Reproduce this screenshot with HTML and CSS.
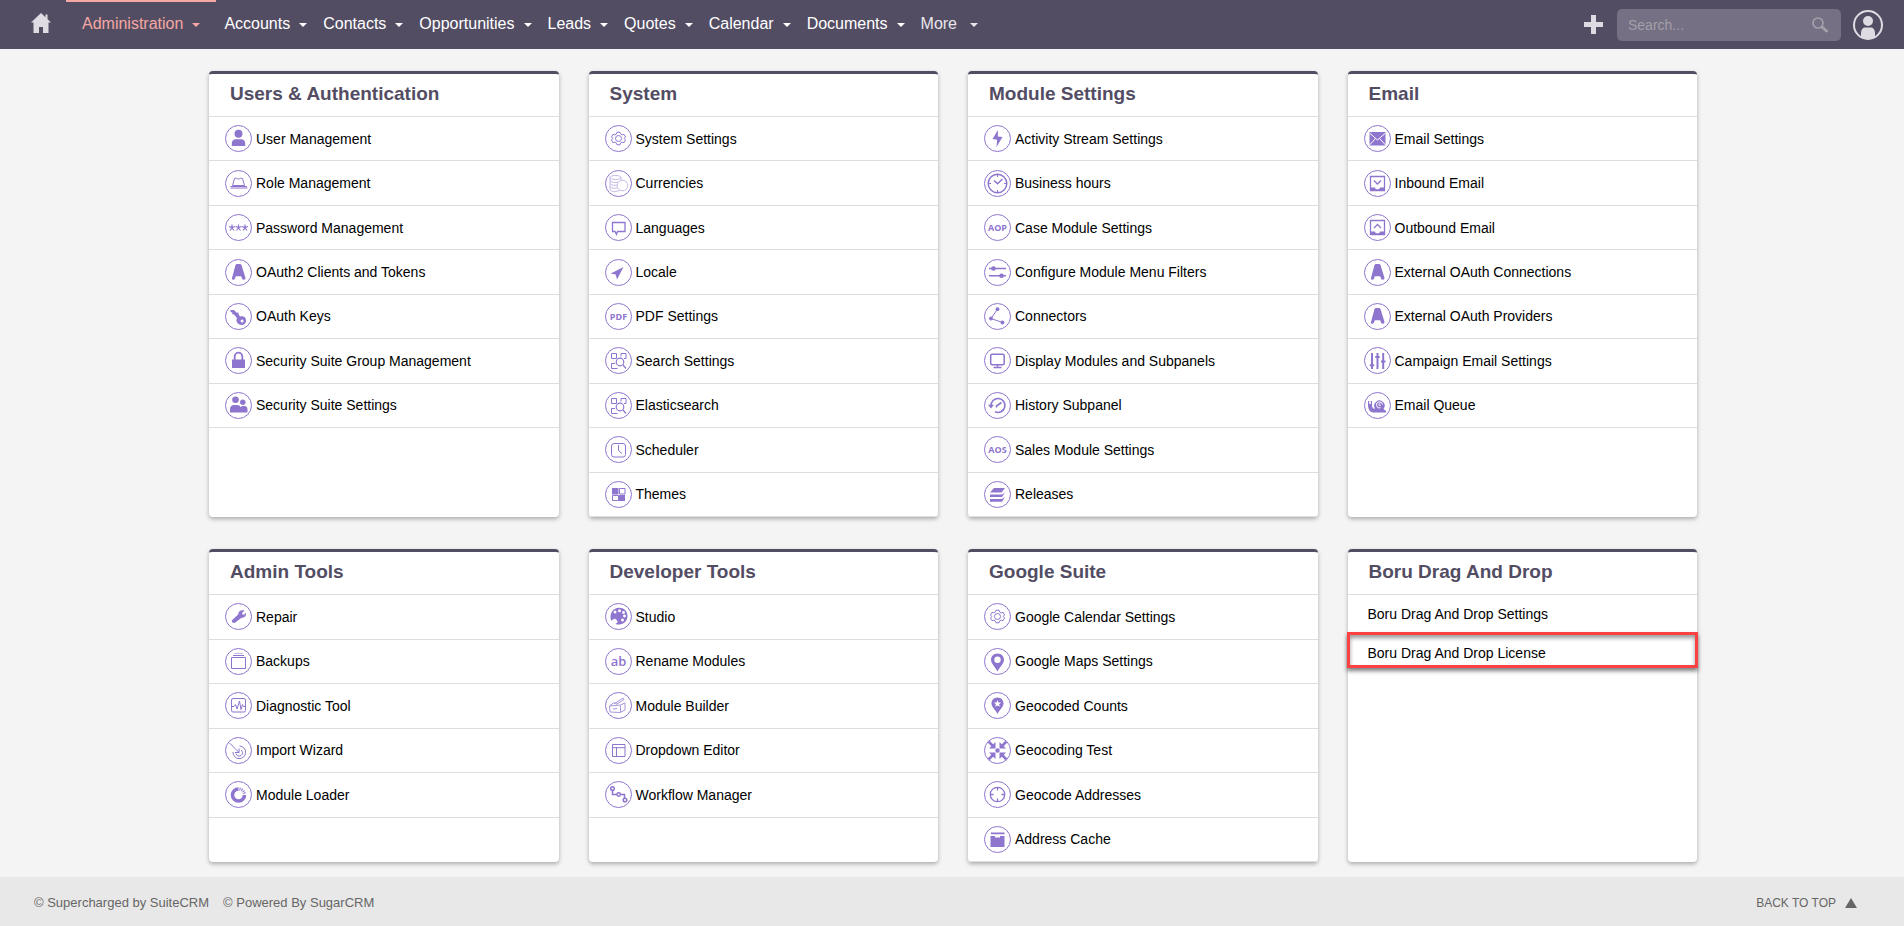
FILE: index.html
```html
<!DOCTYPE html>
<html lang="en">
<head>
<meta charset="utf-8">
<title>Administration</title>
<link rel="stylesheet" href="styles.css">
</head>
<body id="top">
<svg class="sprite" aria-hidden="true">
<defs>
<g id="i-user" class="f"><circle cx="13.500" cy="8.700" r="4"/><path d="M6.800 21v-2.500c0-2.500 1.500-4.300 4-4.300h5.400c2.500 0 4 1.800 4 4.300V21z"/></g>
<g id="i-role" class="s"><path d="M7.500 15.500 9.500 8.500l2-.5 1 1h2l1-1 2 .5 2 7zM5.500 16.500h16.500M5.500 18h17"/></g>
<g id="i-pass" class="s"><path d="M7 10.500v3.500l-2 2.500M7 14l2 2.500M4 12.500l3 1 3-1M13.500 10.500v3.500l-2 2.500M13.500 14l2 2.500M10.500 12.500l3 1 3-1M20 10.500v3.500l-2 2.500M20 14l2 2.500M17 12.500l3 1 3-1" stroke-width="1.200"/></g>
<g id="i-oauth" class="f"><path d="M10.500 6Q11 5 12 5h3q1 0 1.500 1l4 13q0 1.800-1.500 1.800-1.700 0-2-1.300l-.8-2.200h-5.400L10 19.500q-.3 1.300-2 1.300Q6.500 20.800 7 19z"/></g>
<g id="i-key" class="f"><path d="M5.500 7 9 7l3 3 1-1 1 3 1 1.500c4-1 6.500 1.500 6 5-.5 3.500-4.500 4.500-7.500 2.500-2.500-2-2.500-4.500-1.500-6l-3-3.500-2-.5.5-1.500-2-.5zM17 16.500a1.500 1.500 0 1 0 .1 3 1.500 1.500 0 0 0-.1-3z" fill-rule="evenodd"/></g>
<g id="i-lock"><path class="f" d="M7 12.500h13v8.500H7z"/><path class="s" d="M9.700 13V9.500a3.800 3.800 0 0 1 7.600 0V13" stroke-width="1.800"/></g>
<g id="i-users" class="f"><circle cx="10.500" cy="7.800" r="3.300"/><circle cx="17.800" cy="10.200" r="2.700"/><path d="M5 20.500v-3c0-3 1.500-4.500 4-4.500h3c2 0 3 .8 3.500 2l2-1h2c2 0 3 1.500 3 3.500v3z"/></g>
<g id="i-gear" class="s"><circle cx="13.500" cy="13.500" r="3"/><path d="M12 7.200h3l.6 1.700 1.600.9 1.900-.4 1.400 2.500-1.200 1.500 1.200 1.700-1.400 2.500-1.900-.4-1.600.9-.6 1.700h-3l-.6-1.700-1.600-.9-1.900.4-1.400-2.500 1.200-1.700-1.200-1.500 1.400-2.500 1.900.4 1.600-.9z"/></g>
<g id="i-coins" class="s thin"><ellipse cx="10.500" cy="7.500" rx="5.500" ry="2"/><path d="M5 7.500v11.500c0 3 6.500 3 9.500 1.500M16 7.500v3M5 10.500c1 2 6 2.500 8 1.500M5 13.500c1 1.800 5 2.200 7 1.500M5 16.500c1 1.800 5 2.200 7 1.300"/><circle cx="17.500" cy="15.500" r="5.300"/></g>
<g id="i-lang" class="s"><path d="M7.500 8.500h12.500v9h-7.500l-1 2.800-1.500-2.800H7.500z" stroke-width="1.300"/></g>
<g id="i-locale" class="f"><path d="M18.500 8 5.700 14.500l5 1 1.300 5z"/></g>
<g id="i-search" class="s"><path d="M6.500 6.500h5v5h-5zM16 6.500h5v5h-2M10 16.500H6.500v5h6M16 6.500v3"/><circle cx="15" cy="15" r="3.800" stroke-width="1.200"/><path d="M18 18l3 3.500" stroke-width="1.200"/></g>
<g id="i-clock" class="s"><rect x="6.500" y="7.500" width="14" height="13.500" rx="2.500"/><path d="M13.500 9v5.500l3.500 3"/></g>
<g id="i-themes"><path class="f" d="M7 7h6.500v6.500H7zM14 14h6v6h-6z"/><path class="s" d="M14.500 7.500H20V13h-5.500zM7.500 14.500h6v5h-6z"/></g>
<g id="i-bolt" class="f"><path d="M14 5 8.500 14l4.700.7L12.500 22 18.500 12l-4.700-.6z"/></g>
<g id="i-hours" class="s"><circle cx="13.500" cy="13.500" r="9.300" stroke-width="1.500"/><path d="M10 10.500l3.500 3.300 5-4.800" stroke-width="1.500"/><path d="M13.500 4.500v2.500M13.500 20v2.500M4.500 13.500h2.500M20 13.500h2.500"/></g>
<g id="i-filters"><path class="s" d="M5 9.500h17M5 16.700h17" stroke-width="1.500"/><circle class="f" cx="9.500" cy="9.500" r="2.300"/><circle class="f" cx="17.500" cy="16.700" r="2.300"/></g>
<g id="i-connect"><path class="s" d="M13.500 6 7 15.500l11.500 4"/><circle class="f" cx="13.500" cy="6.200" r="1.900"/><circle class="f" cx="7" cy="15.500" r="1.900"/><circle class="f" cx="18.500" cy="19.500" r="1.900"/></g>
<g id="i-monitor" class="s"><rect x="6.700" y="7.200" width="13.500" height="10.500" rx="1.500" stroke-width="1.500"/><path d="M13.500 18v2.500M9.500 20.500h8" stroke-width="1.300"/></g>
<g id="i-history"><path class="s" d="M7 14a7 7 0 1 1 4 5.800M12.500 15.500v-1.500l5-3.500" stroke-width="1.600"/><path class="f" d="M4 12.800h6L7 16.500z"/></g>
<g id="i-stack" class="f"><path d="M10 7h11l-3.500 4.500H6zM6 13.500h12l3-2-3 4.500H6zM6 18h12l3-2.300-3 5H6z"/></g>
<g id="i-mail"><path class="f" d="M5.500 7h16v13.500h-16z"/><path class="w" d="M5.500 8l8 7 8-7M5.500 20l6-6.500M21.500 20l-6-6.500"/></g>
<g id="i-inbox"><path class="s" d="M6.500 6.500h14v14h-14zM10 10.500l3.500 3.500 3.500-3.500" stroke-width="1.300"/><path class="f" d="M6 17.500h5q0 2 2.500 2t2.500-2h5v3.500H6z"/></g>
<g id="i-outbox"><path class="s" d="M6.500 6.500h14v14h-14zM10 14l3.500-3.500 3.500 3.500" stroke-width="1.300"/><path class="f" d="M6 17.500h5q0 2 2.500 2t2.500-2h5v3.500H6z"/></g>
<g id="i-sliders"><path class="s" d="M8 6v16M13.500 6v16M19.200 6v16" stroke-width="2"/><path class="s" d="M5.800 18.200h4.400M11.300 10h4.400M17 14.500h4.500" stroke-width="2"/></g>
<g id="i-snail"><path class="f" d="M4 9h1.200v3h1.600V9H8v5c.5 2 1.500 3 3 2.500A5.200 5.200 0 1 1 19.500 17l2.500 2v1.500H9.500C6 20.500 4 17 4 13z"/><path class="w" d="M18.500 12.500a3 3 0 1 0-2 3.200M16.500 12a1 1 0 1 0 0 1.500"/></g>
<g id="i-wrench" class="f"><path d="M19.500 7.500l-2.500 2.500.5 1.500 1.500.3 2-2c.4 2.700-1 5-4.500 5l-6.500 5c-2 .7-4-1-2.800-2.800l6-5.500c-.2-3 2.500-5.200 6.300-4z"/></g>
<g id="i-backup" class="s"><path d="M6.500 9.500h14v11h-14zM8 7.500h11"/><path d="M9.500 5.500h8.500" class="thin"/></g>
<g id="i-diag" class="s"><rect x="6.500" y="6.500" width="14" height="13.500" rx="1.500"/><path d="M7 14.500h2l1.500-2 1.500 4.500 2.500-8 1.500 8.500 1.500-5 1 2h1.500"/></g>
<g id="i-import" class="s"><path d="M4.500 6l9.500 9.500M14 11.500v4h-4M14.500 9A6.300 6.300 0 1 1 8 15"/><path d="M11 16.500a3.300 3.300 0 1 0 5-3.500"/></g>
<g id="i-loader" class="s"><path d="M13.500 8a6 6 0 1 0 6 6" stroke-width="3.600"/><path d="M14.500 8a6 6 0 0 1 5 5" stroke-width="3" stroke-dasharray="1 1"/></g>
<g id="i-palette"><path class="f" d="M14 4.800c5 0 8.500 3.500 8.500 8.200s-3.500 8.500-8.500 8.500c-3 0-4.500-.7-2-1.500 1-.5.5-3-1.500-4s-3.500 2-4.500 1.500C4 10 8.500 4.800 14 4.800z"/><g fill="#fff"><circle cx="10" cy="9" r="1.500"/><circle cx="14.500" cy="7.700" r="1.500"/><circle cx="18.500" cy="9.500" r="1.400"/><circle cx="19.500" cy="13" r="1.400"/><circle cx="17.500" cy="17" r="1.500"/></g></g>
<g id="i-builder" class="s thin2"><path d="M4.500 14l11-1 4.500-2v7l-5 2.500-10-.5zM9 12l9-6 1 1.500-8 5M15.500 13.500V20M4.500 14l4-3h3M8 17l4-.5"/></g>
<g id="i-layout" class="s"><path d="M7.500 7.500h12.500v12H7.500zM7.500 10.700h12.500M11.500 10.700v9"/></g>
<g id="i-flow" class="s"><path d="M7.500 9v4.500h12V17" stroke-width="1.500"/><circle cx="7.500" cy="7.500" r="1.800" stroke-width="1.500"/><circle cx="13.700" cy="13.500" r="1.700" stroke-width="1.500" fill="#fff"/><circle cx="20" cy="19" r="1.800" stroke-width="1.500"/></g>
<g id="i-pin" class="f"><path d="M13.500 5.500c-4 0-6.500 3-6.500 6.300 0 4 4.500 7.500 6.500 11.700 2-4.200 6.500-7.700 6.500-11.700 0-3.300-2.500-6.300-6.500-6.300zm0 3a3.200 3.200 0 1 1 0 6.400 3.200 3.200 0 0 1 0-6.400z" fill-rule="evenodd"/></g>
<g id="i-pinstar"><path class="f" d="M13.500 5.500c-3.800 0-6 2.800-6 5.800 0 4 4 6.500 6 10.700 2-4.200 6-6.700 6-10.700 0-3-2.200-5.800-6-5.800z"/><path fill="#fff" d="M13.500 8l1 2.400 2.600.2-2 1.700.7 2.500-2.300-1.400-2.300 1.400.7-2.500-2-1.700 2.600-.2z"/></g>
<g id="i-arrows"><circle class="f" cx="13.500" cy="13.500" r="2.200"/><path class="s" d="M4.500 4.500l5 5M22.500 4.500l-5 5M4.500 22.500l5-5M22.500 22.500l-5-5" stroke-width="2.600"/><path class="f" d="M11.500 5v6.500H5zM15.500 5v6.500H22zM11.500 22v-6.500H5zM15.500 22v-6.500H22z"/></g>
<g id="i-target" class="s"><circle cx="13.500" cy="13.500" r="7.200" stroke-width="1.300"/><path d="M13.500 6v3.500M13.500 17.500V21M6 13.500h3.500M17.500 13.500H21" stroke-width="1.300"/></g>
<g id="i-cache" class="f"><path d="M7 6.500h13.500v1.700H7zM6.500 10h4.500v1.500h5V10h4.500v11h-14z"/></g>
</defs>
</svg>

<header class="navbar">
  <a class="home" href="#" aria-label="Home"><svg width="20" height="20" viewBox="0 0 20 20"><path d="M10 0 0 9.500h2.500V20H8v-6h4v6h5.500V9.500H20L16.500 6V1.500h-2v2.700z" fill="#dfdbe2"/></svg></a>
  <nav class="menu" aria-label="Modules">
    <a class="active" href="#">Administration</a>
    <a href="#">Accounts</a>
    <a href="#">Contacts</a>
    <a href="#">Opportunities</a>
    <a href="#">Leads</a>
    <a href="#">Quotes</a>
    <a href="#">Calendar</a>
    <a href="#">Documents</a>
    <a class="more" href="#">More</a>
  </nav>
  <div class="tools">
    <button class="plain create" aria-label="Create"><svg width="19" height="19" viewBox="0 0 19 19"><path d="M7 0h5v7h7v5h-7v7H7v-7H0V7h7z" fill="#dfdbe2"/></svg></button>
    <form class="search">
      <input type="search" placeholder="Search..." aria-label="Search">
      <button class="plain" type="button" aria-label="Run search"><svg width="16" height="16" viewBox="0 0 16 16" fill="none" stroke="#a39faa"><circle cx="6" cy="6" r="5" stroke-width="1.700"/><path d="M10 10l4.500 4" stroke-width="3" stroke-linecap="round"/></svg></button>
    </form>
    <button class="plain" aria-label="User menu"><svg width="30" height="30" viewBox="0 0 30 30"><circle cx="15" cy="15" r="14" fill="none" stroke="#dfdbe2" stroke-width="2"/><circle cx="15" cy="11" r="5" fill="#dfdbe2"/><path d="M8 27v-4c0-3.500 2-5.500 4.500-5.500h5c2.500 0 4.500 2 4.500 5.500v4q-7 4.500-14 0z" fill="#dfdbe2"/></svg></button>
  </div>
</header>

<main class="panels">
  <section class="card tall"><h2>Users &amp; Authentication</h2><ul>
    <li><a href="#"><svg class="icon" viewBox="1 1 25 25"><use href="#i-user"/></svg>User Management</a></li>
    <li><a href="#"><svg class="icon" viewBox="1 1 25 25"><use href="#i-role"/></svg>Role Management</a></li>
    <li><a href="#"><svg class="icon" viewBox="1 1 25 25"><use href="#i-pass"/></svg>Password Management</a></li>
    <li><a href="#"><svg class="icon" viewBox="1 1 25 25"><use href="#i-oauth"/></svg>OAuth2 Clients and Tokens</a></li>
    <li><a href="#"><svg class="icon" viewBox="1 1 25 25"><use href="#i-key"/></svg>OAuth Keys</a></li>
    <li><a href="#"><svg class="icon" viewBox="1 1 25 25"><use href="#i-lock"/></svg>Security Suite Group Management</a></li>
    <li><a href="#"><svg class="icon" viewBox="1 1 25 25"><use href="#i-users"/></svg>Security Suite Settings</a></li>
  </ul></section>
  <section class="card tall"><h2>System</h2><ul>
    <li><a href="#"><svg class="icon" viewBox="1 1 25 25"><use href="#i-gear"/></svg>System Settings</a></li>
    <li><a href="#"><svg class="icon" viewBox="1 1 25 25"><use href="#i-coins"/></svg>Currencies</a></li>
    <li><a href="#"><svg class="icon" viewBox="1 1 25 25"><use href="#i-lang"/></svg>Languages</a></li>
    <li><a href="#"><svg class="icon" viewBox="1 1 25 25"><use href="#i-locale"/></svg>Locale</a></li>
    <li><a href="#"><svg class="icon" viewBox="1 1 25 25"><text x="13.500" y="17" font-size="9">PDF</text></svg>PDF Settings</a></li>
    <li><a href="#"><svg class="icon" viewBox="1 1 25 25"><use href="#i-search"/></svg>Search Settings</a></li>
    <li><a href="#"><svg class="icon" viewBox="1 1 25 25"><use href="#i-search"/></svg>Elasticsearch</a></li>
    <li><a href="#"><svg class="icon" viewBox="1 1 25 25"><use href="#i-clock"/></svg>Scheduler</a></li>
    <li><a href="#"><svg class="icon" viewBox="1 1 25 25"><use href="#i-themes"/></svg>Themes</a></li>
  </ul></section>
  <section class="card tall"><h2>Module Settings</h2><ul>
    <li><a href="#"><svg class="icon" viewBox="1 1 25 25"><use href="#i-bolt"/></svg>Activity Stream Settings</a></li>
    <li><a href="#"><svg class="icon" viewBox="1 1 25 25"><use href="#i-hours"/></svg>Business hours</a></li>
    <li><a href="#"><svg class="icon" viewBox="1 1 25 25"><text x="13.500" y="17" font-size="9">AOP</text></svg>Case Module Settings</a></li>
    <li><a href="#"><svg class="icon" viewBox="1 1 25 25"><use href="#i-filters"/></svg>Configure Module Menu Filters</a></li>
    <li><a href="#"><svg class="icon" viewBox="1 1 25 25"><use href="#i-connect"/></svg>Connectors</a></li>
    <li><a href="#"><svg class="icon" viewBox="1 1 25 25"><use href="#i-monitor"/></svg>Display Modules and Subpanels</a></li>
    <li><a href="#"><svg class="icon" viewBox="1 1 25 25"><use href="#i-history"/></svg>History Subpanel</a></li>
    <li><a href="#"><svg class="icon" viewBox="1 1 25 25"><text x="13.500" y="17" font-size="9">AOS</text></svg>Sales Module Settings</a></li>
    <li><a href="#"><svg class="icon" viewBox="1 1 25 25"><use href="#i-stack"/></svg>Releases</a></li>
  </ul></section>
  <section class="card tall"><h2>Email</h2><ul>
    <li><a href="#"><svg class="icon" viewBox="1 1 25 25"><use href="#i-mail"/></svg>Email Settings</a></li>
    <li><a href="#"><svg class="icon" viewBox="1 1 25 25"><use href="#i-inbox"/></svg>Inbound Email</a></li>
    <li><a href="#"><svg class="icon" viewBox="1 1 25 25"><use href="#i-outbox"/></svg>Outbound Email</a></li>
    <li><a href="#"><svg class="icon" viewBox="1 1 25 25"><use href="#i-oauth"/></svg>External OAuth Connections</a></li>
    <li><a href="#"><svg class="icon" viewBox="1 1 25 25"><use href="#i-oauth"/></svg>External OAuth Providers</a></li>
    <li><a href="#"><svg class="icon" viewBox="1 1 25 25"><use href="#i-sliders"/></svg>Campaign Email Settings</a></li>
    <li><a href="#"><svg class="icon" viewBox="1 1 25 25"><use href="#i-snail"/></svg>Email Queue</a></li>
  </ul></section>

  <section class="card"><h2>Admin Tools</h2><ul>
    <li><a href="#"><svg class="icon" viewBox="1 1 25 25"><use href="#i-wrench"/></svg>Repair</a></li>
    <li><a href="#"><svg class="icon" viewBox="1 1 25 25"><use href="#i-backup"/></svg>Backups</a></li>
    <li><a href="#"><svg class="icon" viewBox="1 1 25 25"><use href="#i-diag"/></svg>Diagnostic Tool</a></li>
    <li><a href="#"><svg class="icon" viewBox="1 1 25 25"><use href="#i-import"/></svg>Import Wizard</a></li>
    <li><a href="#"><svg class="icon" viewBox="1 1 25 25"><use href="#i-loader"/></svg>Module Loader</a></li>
  </ul></section>
  <section class="card"><h2>Developer Tools</h2><ul>
    <li><a href="#"><svg class="icon" viewBox="1 1 25 25"><use href="#i-palette"/></svg>Studio</a></li>
    <li><a href="#"><svg class="icon" viewBox="1 1 25 25"><text class="ab" x="13.500" y="18" font-size="13">ab</text></svg>Rename Modules</a></li>
    <li><a href="#"><svg class="icon" viewBox="1 1 25 25"><use href="#i-builder"/></svg>Module Builder</a></li>
    <li><a href="#"><svg class="icon" viewBox="1 1 25 25"><use href="#i-layout"/></svg>Dropdown Editor</a></li>
    <li><a href="#"><svg class="icon" viewBox="1 1 25 25"><use href="#i-flow"/></svg>Workflow Manager</a></li>
  </ul></section>
  <section class="card"><h2>Google Suite</h2><ul>
    <li><a href="#"><svg class="icon" viewBox="1 1 25 25"><use href="#i-gear"/></svg>Google Calendar Settings</a></li>
    <li><a href="#"><svg class="icon" viewBox="1 1 25 25"><use href="#i-pin"/></svg>Google Maps Settings</a></li>
    <li><a href="#"><svg class="icon" viewBox="1 1 25 25"><use href="#i-pinstar"/></svg>Geocoded Counts</a></li>
    <li><a href="#"><svg class="icon" viewBox="1 1 25 25"><use href="#i-arrows"/></svg>Geocoding Test</a></li>
    <li><a href="#"><svg class="icon" viewBox="1 1 25 25"><use href="#i-target"/></svg>Geocode Addresses</a></li>
    <li><a href="#"><svg class="icon" viewBox="1 1 25 25"><use href="#i-cache"/></svg>Address Cache</a></li>
  </ul></section>
  <section class="card plain-list"><h2>Boru Drag And Drop</h2><ul>
    <li><a href="#">Boru Drag And Drop Settings</a></li>
    <li class="marked"><a href="#">Boru Drag And Drop License</a></li>
  </ul></section>
</main>

<footer class="footer">
  <a href="#">© Supercharged by SuiteCRM</a>
  <a href="#">© Powered By SugarCRM</a>
  <a class="to-top" href="#top">BACK TO TOP<svg width="12" height="10" viewBox="0 0 12 10"><path d="M6 0l6 10H0z" fill="#666"/></svg></a>
</footer>
</body>
</html>
```
FILE: styles.css
```css
* { box-sizing: border-box; }

body {
  margin: 0;
  min-height: 100vh;
  display: flex;
  flex-direction: column;
  background: #f4f4f4;
  font-family: "Liberation Sans", Arial, sans-serif;
  font-size: 14px;
  color: #000;
}

a { color: inherit; text-decoration: none; }

.sprite { position: absolute; width: 0; height: 0; }

/* Top bar */
.navbar {
  display: flex;
  align-items: center;
  height: 49px;
  padding: 0 21px 0 31px;
  background: #534d64;
}

.home { display: flex; margin-right: 15px; padding-bottom: 3px; }

.menu {
  display: flex;
  align-self: stretch;
  font-size: 16px;
  line-height: 18px;
  color: #fff;
}

.menu a {
  display: flex;
  align-items: center;
  gap: 9px;
  padding: 0 8px 1px;
}

.menu a::after {
  content: "";
  margin-top: 2px;
  border: 4px solid transparent;
  border-top-color: currentColor;
  border-bottom: 0;
}

.menu .active {
  padding: 0 16px 1px;
  color: #f5a8a3;
  box-shadow: inset 0 2px #f5a8a3;
}

.menu .more { gap: 13px; color: #e9e7eb; }

.tools {
  display: flex;
  align-items: center;
  gap: 12px;
  margin-left: auto;
}

.plain {
  display: flex;
  padding: 0;
  border: 0;
  background: none;
}

.create { margin-right: 2px; }

.search {
  display: flex;
  align-items: center;
  width: 224px;
  height: 32px;
  padding: 0 13px 0 11px;
  border-radius: 5px;
  background: #757083;
}

.search input {
  flex: 1;
  min-width: 0;
  padding: 0;
  border: 0;
  background: none;
  font: 14px "Liberation Sans", Arial, sans-serif;
  color: #fff;
}

.search input::placeholder { color: #a39faa; opacity: 1; }

/* Panels */
.panels {
  display: grid;
  grid-template-columns: repeat(4, 1fr);
  gap: 32px 30px;
  width: 100%;
  max-width: 1490px;
  margin: 0 auto;
  padding: 22px 0 15px 2px;
}

.card {
  border-top: 3px solid #534d64;
  border-radius: 4px;
  background: #fff;
  box-shadow: 0 2px 4px rgba(0, 0, 0, 0.3);
}

.card h2 {
  height: 43px;
  margin: 0;
  padding: 0 21px;
  border-bottom: 1px solid #dddee3;
  font-size: 19px;
  line-height: 39px;
  color: #534d64;
}

.card ul {
  display: grid;
  grid-template-rows: repeat(6, 1fr);
  height: 267px;
  margin: 0;
  padding: 0;
  list-style: none;
}

.card.tall ul { grid-template-rows: repeat(9, 1fr); height: 400px; }

.card li { border-bottom: 1px solid #dddee3; }

.card li a {
  display: flex;
  align-items: center;
  gap: 4px;
  height: 100%;
  padding: 0 16px;
}

.card.plain-list ul { grid-template-rows: none; grid-auto-rows: 39px; height: auto; }
.plain-list li { position: relative; border: 0; }
.card.plain-list li a { padding: 0 20px 1px; }

.marked::after {
  content: "";
  position: absolute;
  inset: -2px -1px 5px;
  border: 3px solid #fb4141;
  box-shadow: 0 3px 4px rgba(0, 0, 0, 0.5), inset 0 3px 4px rgba(0, 0, 0, 0.4);
  pointer-events: none;
}

/* Round list icons */
.icon {
  flex: none;
  width: 27px;
  height: 27px;
  border: 1px solid #8e75ce;
  border-radius: 50%;
}

.f { fill: #8e75ce; stroke: none; }
.s { fill: none; stroke: #8e75ce; }
.w { fill: none; stroke: #fff; }
.thin { stroke: #c5b8e6; }
.thin2 { stroke: #a995da; }

.icon text {
  fill: #8e75ce;
  font-family: "Open Sans", sans-serif;
  font-weight: 700;
  text-anchor: middle;
}

.icon .ab { font-weight: 600; }

/* Footer */
.footer {
  display: flex;
  align-items: center;
  gap: 14px;
  flex: 1 0 49px;
  padding: 2px 47px 0 34px;
  background: #e8e8e8;
  font-size: 13px;
  color: #666;
}

.to-top {
  display: flex;
  align-items: center;
  gap: 9px;
  margin-left: auto;
  font-size: 12px;
}
```
